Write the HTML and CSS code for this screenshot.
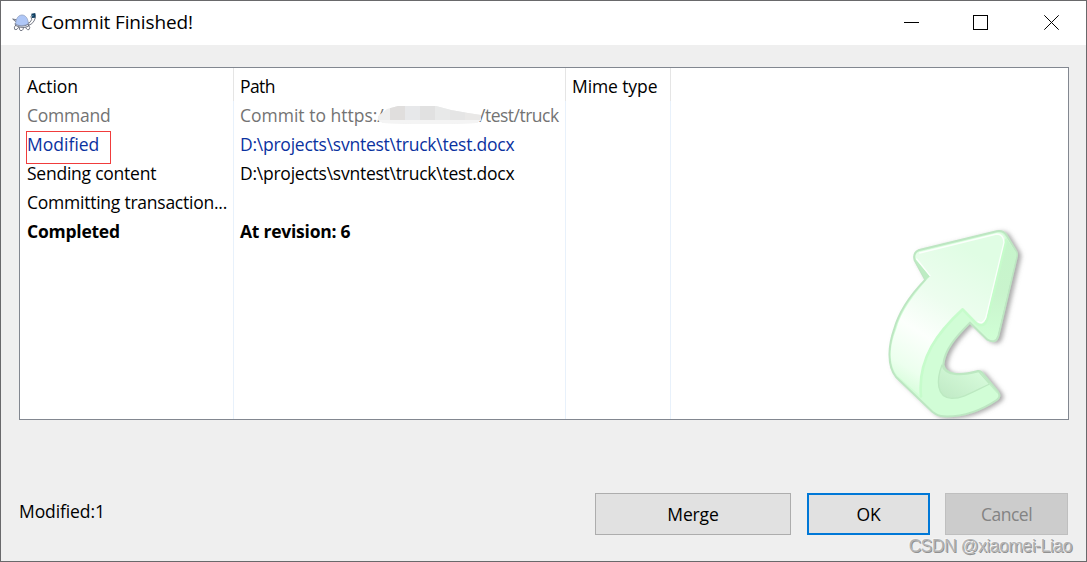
FILE: index.html
```html
<!DOCTYPE html>
<html lang="en">
<head>
    <meta charset="UTF-8">
    <title>Commit Finished!</title>
    <link rel="stylesheet" href="styles.css">
</head>
<body>
    <div class="window">
        <header class="title-bar">
            <svg class="app-icon" viewBox="0 0 72 60">
                <g stroke="#555b69" stroke-width="2.4" stroke-linejoin="round" stroke-linecap="round">
                    <path d="M10 28 L2 21 L12 23 Z" fill="#dfe3ea"/>
                    <path d="M12 38 Q4 46 8 52 Q16 56 21 43 Z" fill="#fff"/>
                    <path d="M24 43 Q19 54 27 56 Q36 55 34 43 Z" fill="#fff"/>
                    <path d="M40 42 Q42 55 51 53 Q57 48 49 38 Z" fill="#fff"/>
                    <path d="M46 34 Q55 34 59 23 L57 13 Q62 4 70 8 Q72 18 66 27 Q62 36 49 41 Z" fill="#fff"/>
                    <path d="M10 35 Q30 49 51 35 L49 43 Q31 51 12 41 Z" fill="#e4e7ee"/>
                </g>
                <path d="M11 37 C11 0 48 0 49 35 Q30 46 11 37 Z" fill="#afc7f7" stroke="#8696b6" stroke-width="2"/>
                <path d="M58 5 L70 3 V17 L60 18 Z" fill="#103e60"/>
                <path d="M61 9 h3 v4 h-3 z" fill="#6aa7c7"/>
            </svg>
            <h1 class="title">Commit Finished!</h1>
            <div class="window-controls">
                <svg class="control" viewBox="0 0 15 15" shape-rendering="crispEdges"><path d="M0 7.5h15"/></svg>
                <svg class="control" viewBox="0 0 15 15" shape-rendering="crispEdges"><path d="M.5 .5h14v14h-14z"/></svg>
                <svg class="control close" viewBox="0 0 15 15"><path d="M.3 .3l14.4 14.4M14.7 .3L.3 14.7"/></svg>
            </div>
        </header>

        <main class="content">
            <div class="list-view">
                <table class="list">
                    <colgroup>
                        <col class="col-action">
                        <col class="col-path">
                        <col class="col-mime">
                        <col>
                    </colgroup>
                    <thead>
                        <tr><th>Action</th><th class="path-head">Path</th><th>Mime type</th><th></th></tr>
                    </thead>
                    <tbody>
                        <tr class="row command">
                            <td>Command</td>
                            <td>
                                <div class="url">
                                    <span class="url-start">Commit to https:/</span>
                                    <svg class="smudge" viewBox="0 0 104 19">
                                        <clipPath id="smudgeShape">
                                            <path d="M0 14 L0 10 L9 3 L20 0 H58 L73 4 L90 7 L103 9 V14 L99 17 L70 18 H35 L5 17 Z"/>
                                        </clipPath>
                                        <g clip-path="url(#smudgeShape)">
                                            <path fill="#eeeeee" d="M0 0h104v19H0z"/>
                                            <path fill="#e0dedd" d="M12 0h15v15H12z"/>
                                            <path fill="#e7e8ea" d="M27 0h15v15H27z"/>
                                            <path fill="#e1e1e1" d="M42 0h15v15H42z"/>
                                            <path fill="#e8e9e9" d="M57 0h15v15H57z"/>
                                            <path fill="#e5e5e5" d="M72 0h15v15H72z"/>
                                            <path fill="#e9e8e7" d="M87 0h17v15H87z"/>
                                            <path fill="#f4f4f4" d="M0 14h104v5H0z"/>
                                        </g>
                                    </svg>
                                    <span class="url-end">/test/truck</span>
                                </div>
                            </td>
                            <td></td><td></td>
                        </tr>
                        <tr class="row modified">
                            <td><span class="marked">Modified</span></td>
                            <td>D:\projects\svntest\truck\test.docx</td><td></td><td></td>
                        </tr>
                        <tr class="row"><td>Sending content</td><td>D:\projects\svntest\truck\test.docx</td><td></td><td></td></tr>
                        <tr class="row"><td>Committing transaction...</td><td></td><td></td><td></td></tr>
                        <tr class="row completed"><td>Completed</td><td>At revision: 6</td><td></td><td></td></tr>
                        <tr class="filler"><td></td><td></td><td></td><td></td></tr>
                    </tbody>
                </table>

                <svg class="arrow" viewBox="0 0 594 612">
                    <defs>
                        <linearGradient id="face" x1="0" y1="1" x2=".45" y2="0">
                            <stop offset="0" stop-color="#c8fccd"/>
                            <stop offset=".2" stop-color="#ecffee"/>
                            <stop offset=".42" stop-color="#fcfffc"/>
                            <stop offset=".65" stop-color="#edfdef"/>
                            <stop offset="1" stop-color="#e0fde4"/>
                        </linearGradient>
                        <linearGradient id="side" x1="0" y1="0" x2="0" y2="1">
                            <stop offset="0" stop-color="#c6f5cb"/>
                            <stop offset=".55" stop-color="#c9f4cd"/>
                            <stop offset="1" stop-color="#d0ffd5"/>
                        </linearGradient>
                        <linearGradient id="inner" x1="0" y1="1" x2="1" y2="0">
                            <stop offset="0" stop-color="#bfe9c4"/>
                            <stop offset="1" stop-color="#dcffe0"/>
                        </linearGradient>
                        <filter id="shadow" x="-10%" y="-10%" width="125%" height="125%">
                            <feDropShadow dx="10" dy="4" stdDeviation="6" flood-color="#777" flood-opacity=".6"/>
                        </filter>
                    </defs>
                    <g filter="url(#shadow)" stroke-linejoin="round" stroke-linecap="round">
                        <path fill="#d1fdd6" stroke="#bde6c2" stroke-width="6" d="M145 106 L380 49 Q400 45 411 63 L438 108 Q443 116 440 127 L385 362 Q378 388 352 374 L300 323 C255 368 224 405 220 448 C226 482 270 483 324 468 Q331 467 337 474 L384 531 Q394 545 380 555 C325 592 270 606 222 604 Q203 603 187 590 L78 486 C48 448 58 384 72 344 C88 286 127 234 166 194 L134 136 Q128 114 145 106 Z"/>
                        <path fill="#bdecc3" d="M134 130 L180 184 L166 196 Z"/>
                        <path fill="url(#face)" d="M147 110 L383 53 Q407 52 408 82 L352 312 Q342 340 319 325 L278 283 C205 350 145 430 152 544 L83 483 C48 440 65 378 78 344 C94 286 133 236 180 184 L138 133 Q133 116 147 110 Z"/>
                        <path fill="url(#side)" d="M408 68 L438 112 Q442 118 437 132 L383 357 Q376 382 355 368 L304 319 L319 325 Q344 340 352 312 Z"/>
                        <path fill="url(#inner)" stroke="#bce9c1" stroke-width="4" d="M216 450 C225 485 275 484 326 470 L359 507 C310 530 278 551 245 550 C198 548 199 494 216 450 Z"/>
                        <path fill="none" stroke="#c6fccb" stroke-width="8" d="M408 76 L352 312 Q342 340 319 325 L278 283 C205 350 142 430 153 544"/>
                        <path fill="none" stroke="#fff" stroke-width="4" opacity=".85" d="M140 132 L180 182 M149 114 L380 57 Q400 57 402 82 L347 310 Q338 329 324 320"/>
                        <path fill="none" stroke="#c2efc7" stroke-width="4" d="M359 507 L382 533"/>
                    </g>
                </svg>
            </div>

            <footer class="footer">
                <p class="summary">Modified:1</p>
                <div class="buttons">
                    <button class="button merge">Merge</button>
                    <button class="button ok">OK</button>
                    <button class="button cancel" disabled>Cancel</button>
                </div>
            </footer>
        </main>
        <div class="watermark">CSDN @xiaomei-Liao</div>
    </div>
</body>
</html>
```
FILE: styles.css
```css
*,
*::after {
    margin: 0;
    padding: 0;
    box-sizing: border-box;
}

body {
    font-family: "Open Sans", "Noto Sans", sans-serif;
    font-size: 17.5px;
    color: #000;
    overflow: hidden;
}

.window {
    position: relative;
    display: flex;
    flex-direction: column;
    width: 1087px;
    height: 562px;
    background: #efefef;
    border: 1px solid #69696b;
}

.title-bar {
    display: flex;
    align-items: center;
    height: 44px;
    padding: 0 27px 2px 11px;
    background: #fff;
}

.app-icon {
    width: 24px;
    height: 20px;
}

.title {
    margin-left: 5px;
    font-size: 19px;
    font-weight: 400;
    line-height: 42px;
    letter-spacing: -0.15px;
}

.window-controls {
    display: flex;
    gap: 54px;
    margin-left: auto;
}

.control {
    width: 15px;
    height: 15px;
    fill: none;
    stroke: #000;
    stroke-width: 1;
}

.close {
    margin-left: 2px;
}

.content {
    display: flex;
    flex: 1;
    flex-direction: column;
    padding: 22px 17px 0 18px;
}

.list-view {
    position: relative;
    height: 353px;
    background: #fff;
    border: 1px solid #828790;
}

.list {
    width: 100%;
    height: 351px;
    table-layout: fixed;
    border-spacing: 0;
}

.col-action {
    width: 214px;
}

.col-path {
    width: 332px;
}

.col-mime {
    width: 105px;
}

.list th,
.list td {
    padding: 0 0 0 7px;
    border-right: 1px solid #e8f1fb;
    font-weight: 400;
    text-align: left;
    white-space: nowrap;
    line-height: 29px;
}

.list td {
    letter-spacing: -0.24px;
}

.list td:nth-child(n+2),
.list th:nth-child(n+2) {
    padding-left: 6px;
}

.list th {
    height: 33px;
    padding-top: 3px;
    border-right-color: #e5e5e5;
    letter-spacing: -0.1px;
}

.list .path-head {
    letter-spacing: -0.6px;
}

.list th:last-child,
.list td:last-child {
    border-right: 0;
}

.row {
    height: 29px;
}

.list .command {
    color: #737373;
}

.list .modified {
    color: #0a32a0;
}

.list .completed td {
    font-weight: 700;
}

.url {
    display: flex;
    align-items: center;
    height: 29px;
}

.url-start {
    width: 143px;
    letter-spacing: 0;
}

.url-end {
    letter-spacing: -0.5px;
}

.smudge {
    z-index: 1;
    flex: none;
    width: 104px;
    height: 19px;
    margin: 0 -3px 0 -5px;
}

/* red frame drawn around the status */
.marked {
    position: relative;
    letter-spacing: 0;
}

.marked::after {
    content: "";
    position: absolute;
    left: -1px;
    top: -1px;
    width: 85px;
    height: 33px;
    border: 1px solid #f03c3c;
}

.arrow {
    position: absolute;
    right: 0;
    bottom: 0;
    width: 198px;
    height: 204px;
}

.footer {
    display: flex;
    justify-content: space-between;
    margin-top: 73px;
}

.summary {
    line-height: 37px;
    letter-spacing: -0.1px;
}

.buttons {
    display: flex;
    gap: 16px;
    margin-right: 1px;
}

.button {
    height: 42px;
    border: 1px solid #adadad;
    background: #e1e1e1;
    color: #000;
    font: inherit;
    letter-spacing: -0.15px;
}

.merge {
    width: 196px;
}

.ok {
    width: 123px;
    border: 2px solid #0078d7;
}

.cancel {
    width: 123px;
    margin-left: -1px;
    border-color: #bfbfbf;
    background: #ccc;
    color: #838383;
    letter-spacing: -0.5px;
}

.watermark {
    position: absolute;
    right: 14px;
    bottom: 3px;
    font: 17.5px/24px "Liberation Sans", Arial, sans-serif;
    letter-spacing: -0.45px;
    color: #b2b2b2;
    text-shadow: -1px -1px 0 #f4f4f4, 1px 1px 0 #929292;
}
```
